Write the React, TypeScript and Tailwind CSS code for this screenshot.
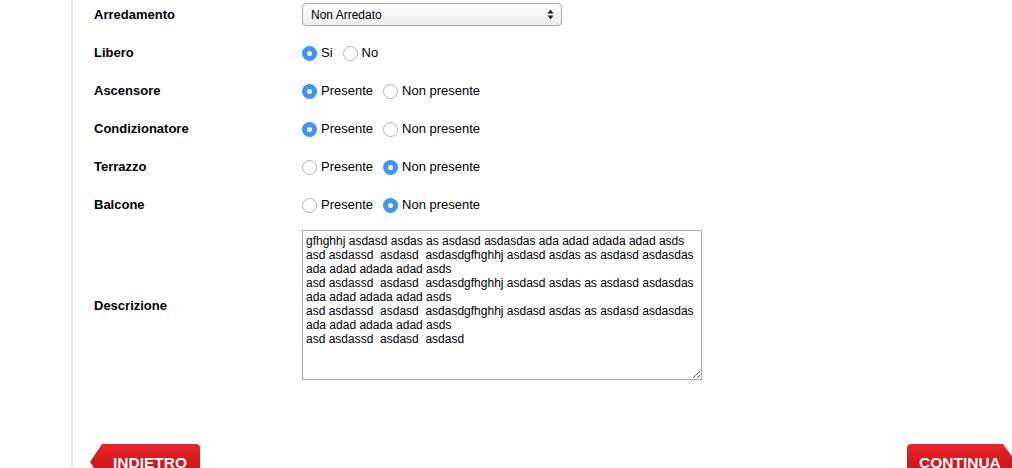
import React from 'react';

interface RadioOption {
  label: string;
  checked: boolean;
}

interface FieldRow {
  label: string;
  options: RadioOption[];
}

const radioRows: FieldRow[] = [
  { label: 'Libero', options: [{ label: 'Si', checked: true }, { label: 'No', checked: false }] },
  { label: 'Ascensore', options: [{ label: 'Presente', checked: true }, { label: 'Non presente', checked: false }] },
  { label: 'Condizionatore', options: [{ label: 'Presente', checked: true }, { label: 'Non presente', checked: false }] },
  { label: 'Terrazzo', options: [{ label: 'Presente', checked: false }, { label: 'Non presente', checked: true }] },
  { label: 'Balcone', options: [{ label: 'Presente', checked: false }, { label: 'Non presente', checked: true }] },
];

const LONG = 'asd asdassd  asdasd  asdasdgfhghhj asdasd asdas as asdasd asdasdas';
const SHORT = 'ada adad adada adad asds';

const descrizione = [
  'gfhghhj asdasd asdas as asdasd asdasdas ada adad adada adad asds',
  LONG,
  SHORT,
  LONG,
  SHORT,
  LONG,
  SHORT,
  'asd asdassd  asdasd  asdasd',
].join('\n');

const Radio: React.FC<RadioOption> = ({ label, checked }) => (
  <label className="flex items-center mr-[10px]">
    {checked ? (
      <span className="w-[15px] h-[15px] rounded-full bg-[#3d95f7] flex items-center justify-center">
        <span className="w-[5px] h-[5px] rounded-full bg-white"></span>
      </span>
    ) : (
      <span className="w-[15px] h-[15px] rounded-full bg-white border border-[#b3b3b3]"></span>
    )}
    <span className="ml-[4px] text-[13px] text-black">{label}</span>
  </label>
);

const App: React.FC = () => {
  return (
    <div className="w-[1012px] h-[468px] overflow-hidden bg-white font-['Liberation_Sans',Arial,sans-serif]">
      <div className="ml-[71px] w-[966px] min-h-[468px] border-l-2 border-[#ececec]">
        <div className="pl-[21px] -mt-[4px]">
          <div className="grid grid-cols-[208px_1fr]">
            <div className="h-[38px] flex items-center text-[13px] font-bold text-black">
              Arredamento
            </div>
            <div className="h-[38px] flex items-center">
              <div className="w-[260px] h-[23px] -mt-[1px] rounded-[4px] border border-[#a9a9a9] bg-gradient-to-b from-white to-[#ededed] flex items-center justify-between pl-[8px] pr-[7px]">
                <span className="text-[12px] text-black">Non Arredato</span>
                <svg width="7" height="11" viewBox="0 0 7 11">
                  <path d="M3.5 0.5 L6.5 4.5 L0.5 4.5 Z" fill="#222" />
                  <path d="M3.5 10.5 L6.5 6.5 L0.5 6.5 Z" fill="#222" />
                </svg>
              </div>
            </div>

            {radioRows.map((row) => (
              <React.Fragment key={row.label}>
                <div className="h-[38px] flex items-center text-[13px] font-bold text-black">
                  {row.label}
                </div>
                <div className="h-[38px] flex items-center">
                  {row.options.map((opt) => (
                    <Radio key={opt.label} label={opt.label} checked={opt.checked} />
                  ))}
                </div>
              </React.Fragment>
            ))}

            <div className="flex items-center text-[13px] font-bold text-black">
              Descrizione
            </div>
            <div className="pt-[6px] pb-[7px]">
              <textarea
                readOnly
                defaultValue={descrizione}
                className="block w-[400px] h-[150px] border border-[#a9a9a9] bg-white p-[3px] text-[12px] leading-[14px] text-black whitespace-pre overflow-hidden resize font-['Liberation_Sans',Arial,sans-serif] outline-none"
              />
            </div>
          </div>
        </div>

        <div className="mt-[57px] flex justify-between pl-[17px] pr-[21px]">
          <button className="w-[110px] h-[36px] rounded-tr-[4px] bg-gradient-to-b from-[#e8262a] to-[#c20b10] [clip-path:polygon(12px_0,100%_0,100%_100%,12px_100%,0_50%)] text-left pl-[23px] pt-[1px] text-[15.5px] font-bold text-white">
            INDIETRO
          </button>
          <button className="w-[109px] h-[36px] rounded-tl-[4px] bg-gradient-to-b from-[#e8262a] to-[#c20b10] [clip-path:polygon(0_0,calc(100%-13px)_0,100%_50%,calc(100%-13px)_100%,0_100%)] text-left pl-[12px] pt-[1px] text-[15.5px] font-bold text-white">
            CONTINUA
          </button>
        </div>
      </div>
    </div>
  );
};

export default App;
